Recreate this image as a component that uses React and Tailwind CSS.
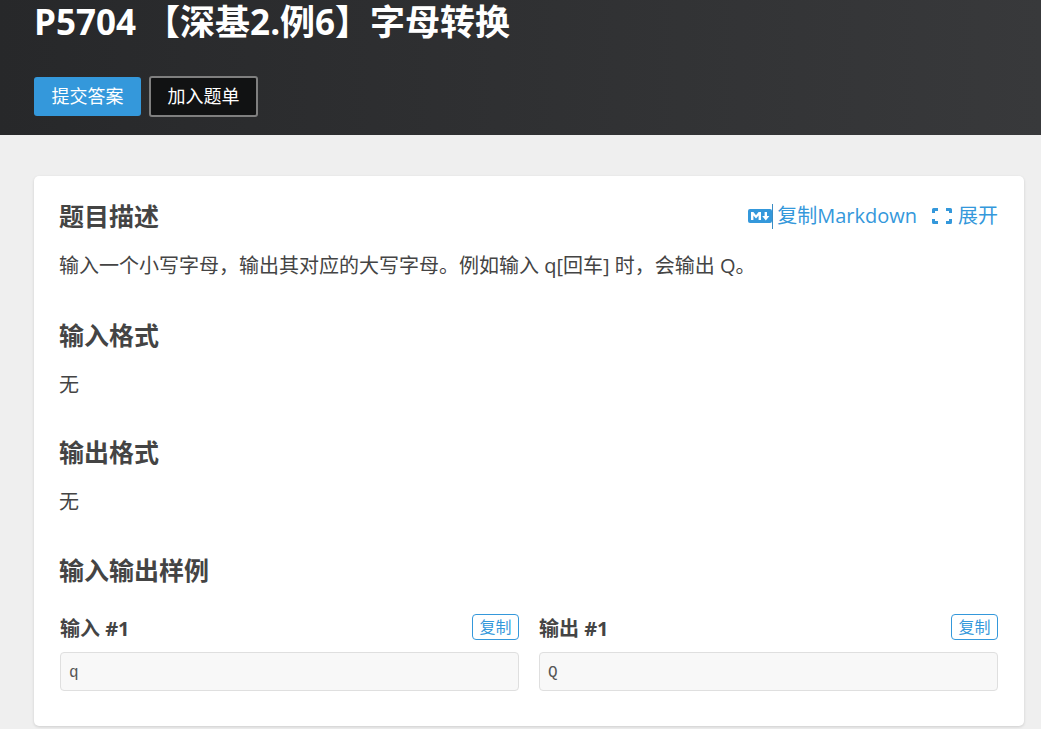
import React from "react";

const sans = "font-['Open_Sans','Noto_Sans_CJK_SC',sans-serif]";

function Sample({ label, value }) {
  return (
    <div className="flex-1 min-w-0">
      <div className="flex items-center justify-between h-[26px]">
        <span className="text-[20px] font-bold text-[#444] leading-[26px] relative top-[2px]">{label}</span>
        <button className="h-[26px] w-[47px] border border-[#3498db] rounded-[4px] text-[#3498db] text-[16px] leading-[22px] bg-white">复制</button>
      </div>
      <pre className="mt-[12px] h-[39px] bg-[#f8f8f8] border border-[#dfdfdf] rounded-[4px] px-[8px] text-[16px] leading-[40px] text-[#555] font-['Liberation_Mono',monospace]">{value}</pre>
    </div>
  );
}

function H({ children, cls }) {
  return <h2 className={"text-[25px] font-bold leading-[32px] text-[#444] " + cls}>{children}</h2>;
}

export default function App() {
  return (
    <div className={"h-[729px] w-[1041px] overflow-hidden bg-[#efefef] " + sans}>
      <header className="h-[135px] bg-gradient-to-r from-[#27282a] to-[#38393b] px-[34px]">
        <h1 className="text-[35px] font-bold text-white leading-[44px]">P5704 【深基2.例6】字母转换</h1>
        <div className="flex gap-[8px] mt-[32px] items-center">
          <button className="w-[107px] h-[39px] bg-[#3498db] rounded-[3px] text-white text-[18px]">提交答案</button>
          <button className="w-[109px] h-[41px] bg-[#111213] border-2 border-[#7f7f7f] rounded-[3px] text-white text-[18px]">加入题单</button>
        </div>
      </header>
      <main className="pl-[34px] pr-[17px] pt-[41px]">
        <section className="relative h-[550px] bg-white rounded-[5px] shadow-[0_1px_3px_rgba(0,0,0,0.14)] pl-[25px] pr-[26px] pt-[24px] text-[#444]">
          <div className="flex justify-between items-start">
            <H cls="">题目描述</H>
            <div className="flex items-center text-[#3498db] text-[20px] leading-[28px] mt-[2px]">
              <svg width="24" height="16" viewBox="0 0 24 16">
                <rect x="0" y="1" width="24" height="14" rx="2" fill="#3498db" />
                <path d="M3 12V4h2.4L8 7.2 10.6 4H13v8h-2.4V7.6L8 10.6 5.4 7.6V12z" fill="#fff" />
                <path d="M16.6 8V4h2.4v4h2.4L17.8 12.4 14.2 8z" fill="#fff" />
              </svg>
              <span className="w-px h-[25px] bg-[#3a8cc4]" />
              <span className="ml-[4px]">复制Markdown</span>
              <svg width="20" height="16" viewBox="0 0 20 16" className="ml-[15px] mr-[6px]" fill="none" stroke="#3498db" strokeWidth="3" strokeLinejoin="round">
                <path d="M1.5 5V1.5H6M14 1.5H18.5V5M18.5 11V14.5H14M6 14.5H1.5V11" />
              </svg>
              <span>展开</span>
            </div>
          </div>
          <p className="text-[20px] leading-[28px] mt-[20px]">输入一个小写字母，输出其对应的大写字母。例如输入 q[回车] 时，会输出 Q。</p>
          <H cls="mt-[39px]">输入格式</H>
          <p className="text-[20px] leading-[28px] mt-[20px]">无</p>
          <H cls="mt-[37px]">输出格式</H>
          <p className="text-[20px] leading-[28px] mt-[20px]">无</p>
          <H cls="mt-[38px]">输入输出样例</H>
          <div className="flex gap-[20px] mt-[28px] pl-[1px]">
            <Sample label="输入 #1" value="q" />
            <Sample label="输出 #1" value="Q" />
          </div>
        </section>
      </main>
    </div>
  );
}
